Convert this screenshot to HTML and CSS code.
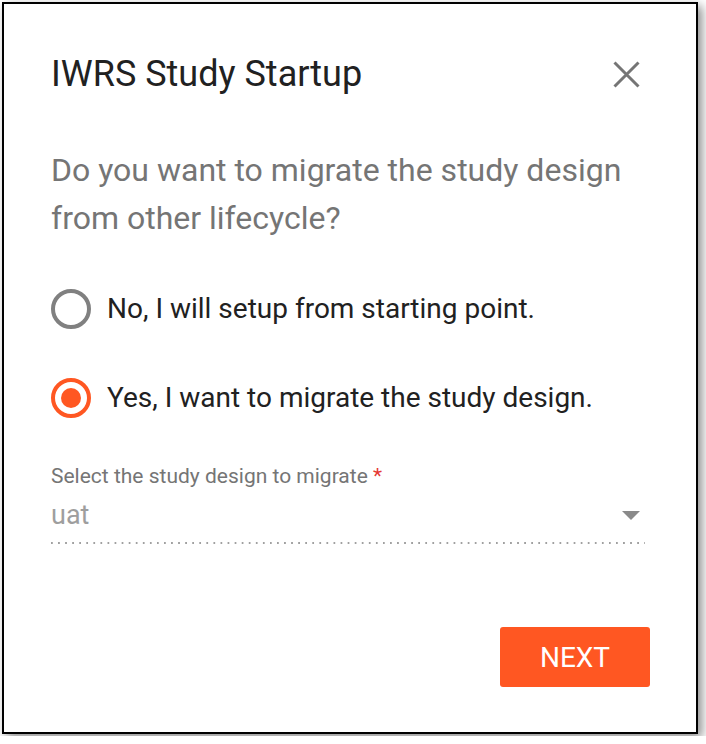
FILE: index.html
```html
<!DOCTYPE html>
<html lang="en">
<head>
  <meta charset="UTF-8" />
  <title>IWRS Study Startup</title>
  <link rel="stylesheet" href="styles.css">
</head>
<body>
  <div class="dialog">
    <div class="dialog-head">
      <h1>IWRS Study Startup</h1>
      <button class="close-btn" aria-label="Close">
        <svg width="27" height="27" viewBox="0 0 27 27">
          <path d="M1.5 1.5 L25.5 25.5 M25.5 1.5 L1.5 25.5" stroke="#757575" stroke-width="3" fill="none" />
        </svg>
      </button>
    </div>
    <p class="question">Do you want to migrate the study design from other lifecycle?</p>

    <div class="options">
      <label class="option">
        <span class="radio"></span>
        No, I will setup from starting point.
      </label>
      <label class="option">
        <span class="radio checked"></span>
        Yes, I want to migrate the study design.
      </label>
    </div>

    <div class="field">
      <div class="field-label">Select the study design to migrate <span class="req">*</span></div>
      <div class="select">
        <span class="select-value">uat</span>
        <span class="caret"></span>
      </div>
    </div>

    <div class="actions">
      <button class="btn">NEXT</button>
    </div>
  </div>
</body>
</html>
```

FILE: styles.css
```css
body {
  font-family: Roboto, 'Noto Sans', sans-serif;
  background-color: white;
  color: #212121;
  margin: 0;
  padding: 2px;
}
.dialog {
  width: 696px;
  height: 732px;
  box-sizing: border-box;
  border: 2px solid #000;
  box-shadow: 4px 4px 10px rgba(0, 0, 0, 0.45);
  padding: 0 51px 0 47px;
}
.dialog-head {
  display: flex;
  justify-content: space-between;
  align-items: center;
  padding-top: 50px;
}
h1 {
  margin: 0;
  font-size: 36px;
  font-weight: 400;
  color: #212121;
  line-height: 40px;
}
.close-btn {
  border: none;
  background: none;
  padding: 0;
  margin-right: 5px;
  width: 27px;
  height: 27px;
  cursor: pointer;
}
.question {
  margin: 52px 0 0;
  font-size: 32px;
  line-height: 48px;
  color: #757575;
}
.options {
  margin-top: 47px;
  display: flex;
  flex-direction: column;
  gap: 49px;
}
.option {
  display: flex;
  align-items: center;
  gap: 16px;
  font-size: 28px;
  color: #212121;
  line-height: 40px;
}
.radio {
  width: 40px;
  height: 40px;
  border: 4px solid #808080;
  border-radius: 50%;
  box-sizing: border-box;
  display: flex;
  align-items: center;
  justify-content: center;
  flex-shrink: 0;
}
.radio.checked {
  border-color: #ff5722;
}
.radio.checked::after {
  content: "";
  width: 20px;
  height: 20px;
  border-radius: 50%;
  background-color: #ff5722;
}
.field {
  margin-top: 46px;
}
.field-label {
  font-size: 21px;
  color: #757575;
  line-height: 24px;
}
.req {
  color: #e53935;
}
/* linea punteada bajo el select */
.select {
  display: flex;
  justify-content: space-between;
  align-items: center;
  height: 56px;
  box-sizing: border-box;
  padding-bottom: 2px;
  background-image: linear-gradient(to right, #a0a0a0 2px, transparent 2px);
  background-size: 7px 2px;
  background-repeat: space no-repeat;
  background-position: left bottom;
}
.select-value {
  font-size: 27px;
  color: #9e9e9e;
}
.caret {
  width: 0;
  height: 0;
  border-left: 9px solid transparent;
  border-right: 9px solid transparent;
  border-top: 9px solid #8a8a8a;
  margin-right: 5px;
}
.actions {
  display: flex;
  justify-content: flex-end;
  margin-top: 83px;
}
.btn {
  background-color: #ff5722;
  color: white;
  font-family: Roboto, sans-serif;
  font-size: 28px;
  width: 150px;
  height: 60px;
  border: none;
  border-radius: 3px;
  margin-right: -5px;
  cursor: pointer;
}
```
